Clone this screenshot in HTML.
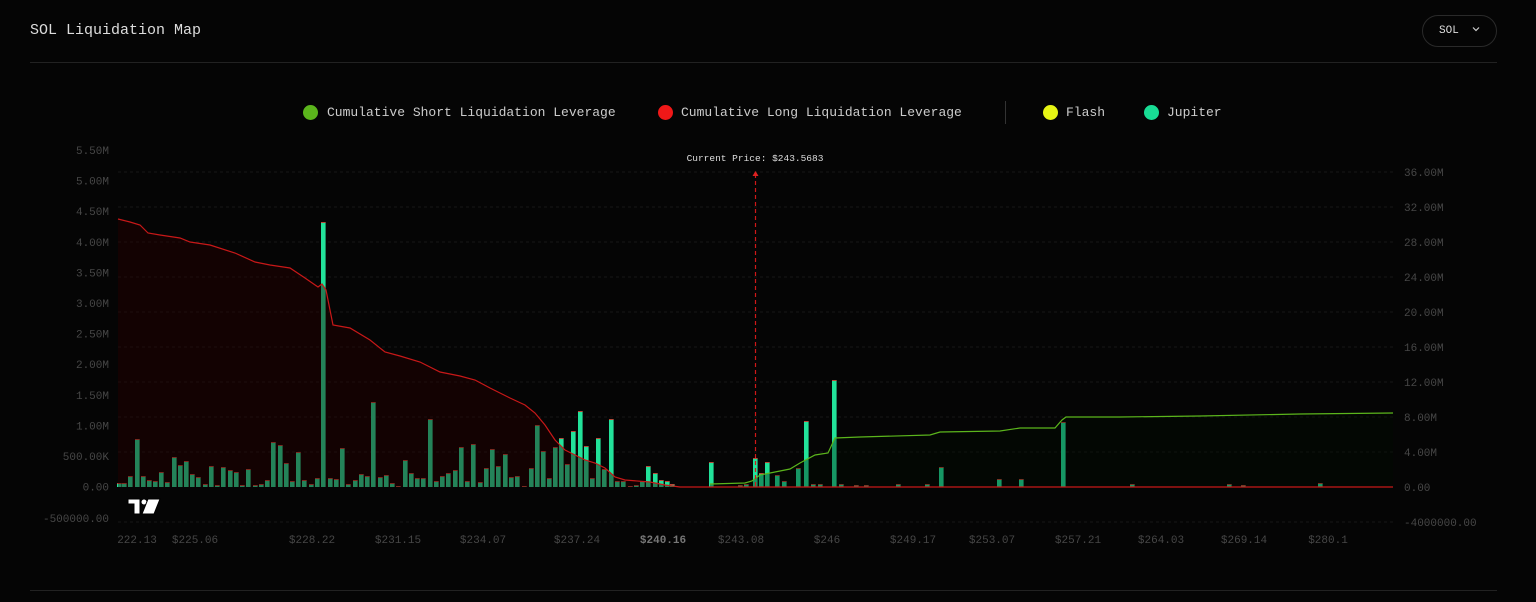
<!DOCTYPE html>
<html><head><meta charset="utf-8"><style>
html,body{margin:0;padding:0;background:#050505;width:1536px;height:602px;overflow:hidden;font-family:"Liberation Mono",monospace;}
.t{position:absolute;left:30px;top:22px;color:#ddd;font-size:15px;}
.hr{position:absolute;left:30px;width:1467px;height:1px;background:#222;}
.btn{position:absolute;left:1422px;top:15px;width:75px;height:32px;border:1px solid #2a2a2a;border-radius:16px;color:#ddd;font-size:11px;line-height:30px;text-align:left;box-sizing:border-box;padding-left:16px;}
.lg{position:absolute;top:105px;color:#ccc;font-size:13px;white-space:nowrap;}
.dot{position:absolute;top:105px;width:15px;height:15px;border-radius:50%;}
</style></head><body>
<div class="t">SOL Liquidation Map</div>
<div class="btn">SOL <svg width="10" height="8" style="margin-left:6px" viewBox="0 0 10 8"><path d="M2 2.5 L5 5.5 L8 2.5" stroke="#ccc" stroke-width="1.2" fill="none"/></svg></div>
<div class="hr" style="top:62px"></div>
<div class="hr" style="top:590px"></div>
<div class="dot" style="left:303px;background:#5bb51c"></div><div class="lg" style="left:327px">Cumulative Short Liquidation Leverage</div>
<div class="dot" style="left:658px;background:#f01818"></div><div class="lg" style="left:681px">Cumulative Long Liquidation Leverage</div>
<div style="position:absolute;left:1005px;top:101px;width:1px;height:23px;background:#333"></div>
<div class="dot" style="left:1043px;background:#e6f514"></div><div class="lg" style="left:1066px">Flash</div>
<div class="dot" style="left:1144px;background:#18dc94"></div><div class="lg" style="left:1167px">Jupiter</div>
<svg id="c" width="1536" height="602" style="position:absolute;left:0;top:0" font-family="Liberation Mono, monospace"></svg>
<script>
var s='';
[172,207,242,277,312,347,382,417,452,522].forEach(function(y){s+='<line x1="118" x2="1393" y1="'+y+'" y2="'+y+'" stroke="#171717" stroke-dasharray="3,3"/>';});
var L=['5.50M','5.00M','4.50M','4.00M','3.50M','3.00M','2.50M','2.00M','1.50M','1.00M','500.00K','0.00'];
L.forEach(function(t,i){s+='<text x="109" y="'+(154+i*30.6)+'" fill="#474747" font-size="11" text-anchor="end">'+t+'</text>';});
s+='<text x="109" y="522" fill="#474747" font-size="11" text-anchor="end">-500000.00</text>';
var R=['36.00M','32.00M','28.00M','24.00M','20.00M','16.00M','12.00M','8.00M','4.00M','0.00','-4000000.00'];
R.forEach(function(t,i){s+='<text x="1404" y="'+(176+i*35)+'" fill="#474747" font-size="11">'+t+'</text>';});
var X=[[137,'222.13'],[195,'$225.06'],[312,'$228.22'],[398,'$231.15'],[483,'$234.07'],[577,'$237.24'],[663,'$240.16'],[741,'$243.08'],[827,'$246'],[913,'$249.17'],[992,'$253.07'],[1078,'$257.21'],[1161,'$264.03'],[1244,'$269.14'],[1328,'$280.1']];
X.forEach(function(a,i){s+='<text x="'+a[0]+'" y="543" fill="'+(i==6?'#777':'#474747')+'" font-size="11" '+(i==6?'font-weight="bold" ':'')+'text-anchor="middle">'+a[1]+'</text>';});
var B=[[119,483],[124,483],[130,476],[137,439],[143,476],[149,480],[155,481],[161,472],[167,482],[174,457],[180,465],[186,461],[192,474],[198,477],[205,484],[211,466],[217,485],[223,467],[230,470],[236,472],[242,485],[248,469],[255,485],[261,484],[267,480],[273,442],[280,445],[286,463],[292,481],[298,452],[304,480],[311,484],[317,478],[323,222],[330,478],[336,479],[342,448],[348,484],[355,480],[361,474],[367,476],[373,402],[380,477],[386,475],[392,483],[398,486],[405,460],[411,473],[417,478],[423,478],[430,419],[436,481],[442,476],[448,473],[455,470],[461,447],[467,481],[473,444],[480,482],[486,468],[492,449],[498,466],[505,454],[511,477],[517,476],[524,486],[531,468],[537,425],[543,451],[549,478],[555,447],[561,438],[567,464],[573,431],[580,411],[586,446],[592,478],[598,438],[604,469],[611,419],[617,481],[623,481],[630,486],[636,485],[642,481],[648,466],[655,473],[661,480],[667,481],[672,484],[711,462],[740,485],[746,484],[755,458],[761,473],[767,462],[777,475],[784,481],[798,468],[806,421],[813,484],[820,484],[834,380],[841,484],[856,485],[866,485],[898,484],[927,484],[941,467],[999,479],[1021,479],[1063,422],[1132,484],[1229,484],[1243,485],[1320,483]];
B.forEach(function(b){s+='<rect x="'+(b[0]-2)+'" y="'+b[1]+'" width="4.6" height="'+(487-b[1])+'" fill="#22e29a"/><rect x="'+(b[0]-2)+'" y="'+b[1]+'" width="4.6" height="1" fill="#b84a3a"/>';});
var r=[[118,219],[130,222],[140,225],[148,233],[160,235],[180,238],[190,242],[210,245],[235,253],[255,262],[270,265],[290,268],[305,278],[318,287],[322,284],[326,290],[333,325],[350,328],[370,340],[385,352],[400,356],[420,362],[440,372],[460,376],[475,380],[490,388],[510,398],[525,405],[535,413],[545,425],[555,440],[565,450],[575,455],[585,460],[595,463],[605,468],[615,477],[625,480],[650,482],[665,485],[680,487],[1393,487]];
var rp=r.map(function(p){return p.join(',')}).join(' ');
s+='<polygon points="'+rp+' 1393,487 118,487" fill="rgba(40,0,0,0.42)"/>';
var g=[[710,484],[745,483],[752,481],[760,475],[775,472],[790,469],[800,463],[815,455],[828,453],[835,438],[860,437],[930,435],[940,432],[1000,431],[1020,428],[1055,428],[1062,420],[1066,417],[1120,417],[1200,416],[1300,414],[1393,413]];
var gp=g.map(function(p){return p.join(',')}).join(' ');
s+='<polygon points="'+gp+' 1393,487 710,487" fill="rgba(0,12,0,0.35)"/>';
s+='<polyline points="'+rp+'" fill="none" stroke="#c81818" stroke-width="1.2"/>';
s+='<polyline points="'+gp+'" fill="none" stroke="#5bb51c" stroke-width="1.2"/>';
s+='<line x1="755.5" x2="755.5" y1="174" y2="487" stroke="#d01818" stroke-width="1.2" stroke-dasharray="4,3"/>';
s+='<path d="M752.5 176 L755.5 171 L758.5 176Z" fill="#e02020"/>';
s+='<text x="755" y="161" fill="#ddd" font-size="9.5" text-anchor="middle">Current Price: $243.5683</text>';
s+='<g transform="translate(128,499)"><path d="M0 0 H12 V15 H6 V5 H0Z" fill="#fff" stroke="#000" stroke-width="1"/><circle cx="16" cy="3" r="2.5" fill="#fff"/><path d="M20 0 H32 L26 15 H14 Z" fill="#fff" stroke="#000" stroke-width="1"/></g>';
document.getElementById('c').innerHTML=s;
</script>
</body></html>
